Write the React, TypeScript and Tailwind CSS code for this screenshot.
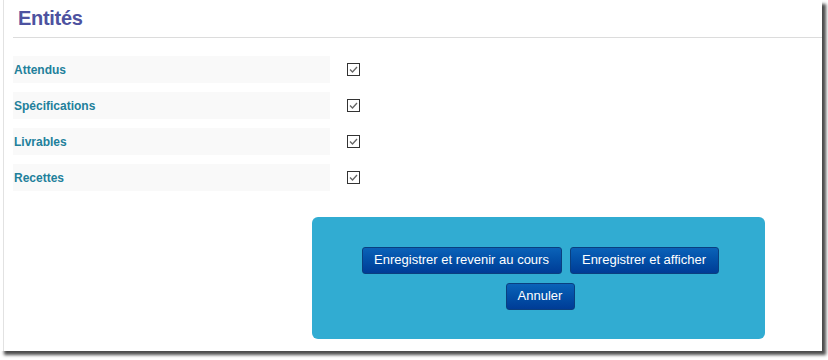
import React from "react";

const entities = ["Attendus", "Spécifications", "Livrables", "Recettes"];

const CheckBox = () => (
  <span className="flex h-[13px] w-[13px] items-center justify-center border border-[#333] bg-white">
    <svg width="11" height="11" viewBox="0 0 11 11">
      <path d="M2 5.5 L4.5 8 L9 3" fill="none" stroke="#666" strokeWidth="1.3" />
    </svg>
  </span>
);

const ActionButton = ({ label, width }: { label: string; width: string }) => (
  <button
    className={`h-[27px] ${width} rounded-[3px] border border-[#0a3f7f] bg-gradient-to-b from-[#0b62b8] to-[#003c96] text-[13px] text-white`}
  >
    {label}
  </button>
);

export default function App() {
  return (
    <div className="h-[360px] w-[828px] bg-white font-['Liberation_Sans',sans-serif]">
      <div className="h-[351px] w-[822px] bg-white pl-[3px] shadow-[4px_4px_3px_rgba(0,0,0,0.7)]">
        <div className="h-full border-l border-[#e2e2e2] pl-[9px]">
          <div className="border-b border-[#dcdcdc] pl-[5px] pt-[3px] h-[38px]">
            <h2 className="text-[20px] font-bold text-[#4d52a0] tracking-[-0.3px]">Entités</h2>
          </div>

          <div className="mt-[18px] flex flex-col gap-[9px]">
            {entities.map((name) => (
              <div key={name} className="flex h-[27px] items-center">
                <div className="flex h-full w-[317px] items-center bg-[#f9f9f9] pl-[1px] text-[12px] font-bold text-[#22809b]">
                  {name}
                </div>
                <div className="ml-[17px]">
                  <CheckBox />
                </div>
              </div>
            ))}
          </div>

          <div className="ml-[299px] mt-[26px] flex h-[122px] w-[453px] flex-col items-center justify-center gap-[9px] rounded-[6px] bg-[#31acd2] pl-[3px]">
            <div className="flex gap-[8px]">
              <ActionButton label="Enregistrer et revenir au cours" width="w-[200px]" />
              <ActionButton label="Enregistrer et afficher" width="w-[149px]" />
            </div>
            <ActionButton label="Annuler" width="w-[69px]" />
          </div>
        </div>
      </div>
    </div>
  );
}
